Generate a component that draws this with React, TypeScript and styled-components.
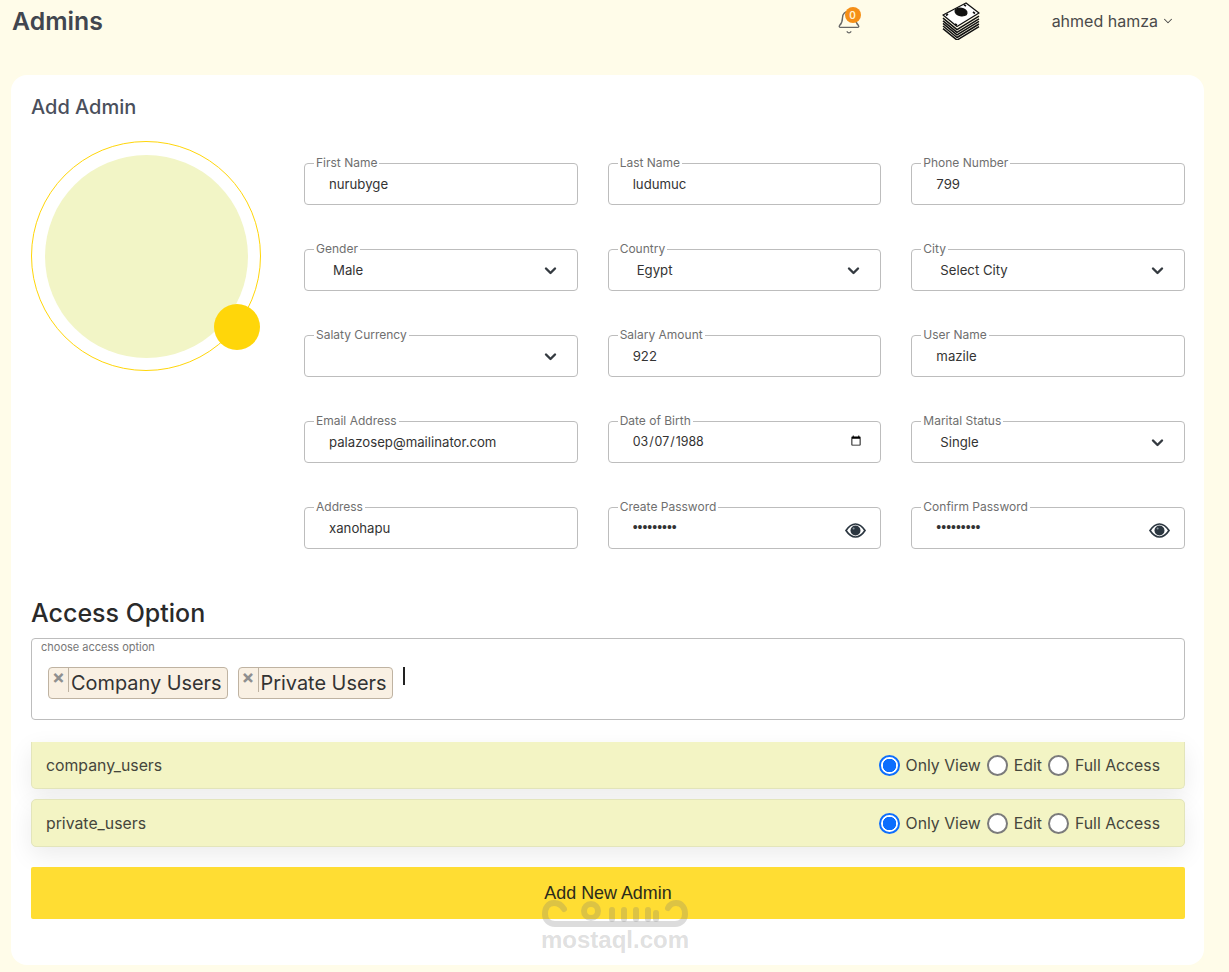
import React from "react";
import styled, { createGlobalStyle } from "styled-components";
import { Bell, ChevronDown } from "lucide-react";

const Global = createGlobalStyle`
  * { box-sizing: border-box; }
  html, body { margin: 0; padding: 0; }
  body { background: #fffce9; font-family: Inter, "Noto Sans", sans-serif; color: #333; }
`;

const Page = styled.div`
  position: relative;
  width: 1229px;
  height: 972px;
  padding: 0 25px 0 11px;
  overflow: hidden;
`;

const Header = styled.header`
  display: flex;
  align-items: flex-start;
  justify-content: space-between;
  height: 75px;
  padding-right: 29px;
`;

const PageTitle = styled.h1`
  margin: 5px 0 0 1px;
  font-size: 24.8px;
  line-height: 32px;
  font-weight: 600;
  color: #41464f;
`;

const HeaderRight = styled.div`
  display: flex;
  align-items: flex-start;
`;

const BellWrap = styled.div`
  position: relative;
  width: 22px;
  height: 22px;
  margin-top: 9px;
  color: #666;
  svg {
    display: block;
    margin-left: -2px;
  }
`;

const BellBadge = styled.span`
  position: absolute;
  left: 7px;
  top: -2px;
  width: 16px;
  height: 16px;
  border-radius: 50%;
  background: #f58f17;
  color: #fff3d0;
  font-size: 10px;
  line-height: 16px;
  font-weight: 600;
  text-align: center;
`;

const Money = styled.svg`
  display: block;
  width: 38px;
  height: 38px;
  margin: 2px 72px 0 82px;
`;

const UserName = styled.div`
  display: flex;
  align-items: center;
  gap: 3px;
  height: 22px;
  margin-top: 10px;
  font-size: 16px;
  color: #4a4a4a;
`;

const Card = styled.main`
  background: #fff;
  border-radius: 16px;
  height: 890px;
  padding: 20px 19px 0 20px;
`;

const CardTitle = styled.h2`
  margin: 0;
  font-size: 20px;
  line-height: 24px;
  font-weight: 500;
  color: #4a4f5c;
`;

const TopSection = styled.section`
  display: flex;
  margin-top: 22px;
`;

const AvatarRing = styled.div`
  position: relative;
  flex: none;
  width: 230px;
  height: 230px;
  border: 1px solid #ffd60a;
  border-radius: 50%;
  display: flex;
  align-items: center;
  justify-content: center;
`;

const AvatarFill = styled.div`
  width: 203px;
  height: 203px;
  border-radius: 50%;
  background: #f2f5c6;
`;

const AvatarDot = styled.div`
  position: absolute;
  left: 182px;
  top: 162px;
  width: 46px;
  height: 46px;
  border-radius: 50%;
  background: #ffd60a;
`;

const FormGrid = styled.div`
  flex: 1;
  margin: 22px 0 0 43px;
  display: grid;
  grid-template-columns: repeat(3, 1fr);
  column-gap: 30px;
  row-gap: 44px;
`;

const Field = styled.div`
  position: relative;
  height: 42px;
  border: 1px solid #bdbdbd;
  border-radius: 4px;
  background: #fff;
`;

const FieldLabel = styled.label`
  position: absolute;
  left: 9px;
  top: -9px;
  padding: 0 2px;
  background: #fff;
  font-size: 12px;
  line-height: 15px;
  color: #6f6f6f;
  white-space: nowrap;
`;

const TextInput = styled.input`
  width: 100%;
  height: 100%;
  border: 0;
  outline: 0;
  background: transparent;
  padding: 0 16px 0 24px;
  font-family: Inter, sans-serif;
  font-size: 13.2px;
  color: #333;
`;

const PasswordInput = styled(TextInput)`
  padding: 0 38px 3px 24px;
  font-family: "Liberation Sans", Arial, sans-serif;
  font-size: 14px;
`;

const DateInput = styled(TextInput)`
  padding: 0 16px 2px 23px;
  font-size: 12.4px;
`;

const SelectInput = styled.select`
  width: 100%;
  height: 100%;
  border: 0;
  outline: 0;
  appearance: none;
  background: transparent;
  padding: 0 38px 0 28px;
  font-family: Inter, sans-serif;
  font-size: 13.2px;
  color: #333;
`;

const SelectArrow = styled.svg`
  position: absolute;
  right: 20px;
  top: 14px;
  width: 13px;
  height: 13px;
  pointer-events: none;
`;

const EyeIcon = styled.svg`
  position: absolute;
  right: 14px;
  top: 15px;
  width: 21px;
  height: 15px;
`;

const AccessTitle = styled.h2`
  margin: 49px 0 0;
  font-size: 25px;
  line-height: 30px;
  font-weight: 500;
  color: #2a2a2a;
`;

const TagBox = styled.div`
  position: relative;
  height: 82px;
  margin-top: 10px;
  border: 1px solid #bdbdbd;
  border-radius: 4px;
  display: flex;
  align-items: flex-start;
  gap: 10px;
  padding: 28px 0 0 16px;
`;

const TagLabel = styled.span`
  position: absolute;
  left: 9px;
  top: 2px;
  font-size: 11px;
  line-height: 13px;
  color: #777;
`;

const Tag = styled.div`
  display: flex;
  height: 32px;
  border: 1px solid #bfb3a2;
  border-radius: 4px;
  background: #f9f0e3;
  font-size: 19.9px;
  line-height: 30px;
  color: #333;
`;

const TagRemove = styled.span`
  width: 20px;
  height: 24px;
  padding: 0 0 0 3px;
  border-right: 1px solid #bfb3a2;
  font-size: 19px;
  line-height: 20px;
  font-weight: 700;
  color: #8f8f8f;
`;

const TagText = styled.span`
  padding: 0 5px 0 2px;
`;

const Caret = styled.span`
  width: 2px;
  height: 18px;
  background: #222;
`;

const PermissionRow = styled.div<{ $first?: boolean }>`
  display: flex;
  align-items: center;
  justify-content: space-between;
  height: ${(p) => (p.$first ? "47px" : "48px")};
  margin-top: ${(p) => (p.$first ? "22px" : "10px")};
  padding: 0 24px 0 14px;
  background: #f3f4c4;
  border: 1px solid #e3e5bb;
  border-top: ${(p) => (p.$first ? "0" : "1px solid #e3e5bb")};
  border-radius: ${(p) => (p.$first ? "0 0 5px 5px" : "5px")};
  box-shadow: 0 8px 24px rgba(0, 0, 0, 0.08);
  font-size: 15.8px;
  color: #45463c;
`;

const RadioGroup = styled.div`
  display: flex;
  align-items: center;
`;

const RadioLabel = styled.label`
  display: flex;
  align-items: center;
  gap: 6px;
  margin-left: 6px;
`;

const Radio = styled.input`
  appearance: none;
  width: 21px;
  height: 21px;
  margin: 0;
  border: 2px solid #7b7b7b;
  border-radius: 50%;
  background: #fff;
  &:checked {
    border-color: #0d6efd;
    background: radial-gradient(circle, #0d6efd 0 6.5px, #fff 7px);
  }
`;

const SubmitButton = styled.button`
  display: block;
  width: 100%;
  height: 52px;
  margin-top: 20px;
  padding: 0;
  border: 0;
  border-radius: 2px;
  background: #ffdd33;
  font-family: "Liberation Sans", Arial, sans-serif;
  font-size: 17.9px;
  color: #2b2b1c;
`;

const Watermark = styled.div`
  position: absolute;
  left: 540px;
  top: 895px;
  width: 150px;
  pointer-events: none;
  text-align: center;
`;

const WatermarkLogo = styled.svg`
  display: block;
  width: 150px;
  height: 36px;
`;

const WatermarkText = styled.div`
  margin-top: -3px;
  font-family: "Liberation Sans", Arial, sans-serif;
  font-size: 24px;
  line-height: 24px;
  font-weight: 700;
  color: rgba(120, 120, 120, 0.24);
`;

const Arrow = () => (
  <SelectArrow viewBox="0 0 13 13" fill="none" stroke="#343a40" strokeWidth="2.4" strokeLinecap="round" strokeLinejoin="round">
    <path d="M2 4.5l4.5 4.5 4.5-4.5" />
  </SelectArrow>
);

const Eye = () => (
  <EyeIcon viewBox="0 0 21 15">
    <path d="M1 7.5C4 3 7 1 10.5 1S17 3 20 7.5C17 12 14 14 10.5 14S4 12 1 7.5z" fill="none" stroke="#2b3640" strokeWidth="1.7" />
    <circle cx="10.5" cy="7.5" r="5" fill="#2b3640" />
    <circle cx="8.6" cy="5.6" r="1" fill="#8a949c" />
  </EyeIcon>
);

type FieldDef = { label: string; kind: "text" | "select" | "date" | "password"; value: string };

const fields: FieldDef[] = [
  { label: "First Name", kind: "text", value: "nurubyge" },
  { label: "Last Name", kind: "text", value: "ludumuc" },
  { label: "Phone Number", kind: "text", value: "799" },
  { label: "Gender", kind: "select", value: "Male" },
  { label: "Country", kind: "select", value: "Egypt" },
  { label: "City", kind: "select", value: "Select City" },
  { label: "Salaty Currency", kind: "select", value: "" },
  { label: "Salary Amount", kind: "text", value: "922" },
  { label: "User Name", kind: "text", value: "mazile" },
  { label: "Email Address", kind: "text", value: "palazosep@mailinator.com" },
  { label: "Date of Birth", kind: "date", value: "1988-03-07" },
  { label: "Marital Status", kind: "select", value: "Single" },
  { label: "Address", kind: "text", value: "xanohapu" },
  { label: "Create Password", kind: "password", value: "123456789" },
  { label: "Confirm Password", kind: "password", value: "123456789" },
];

const FormField = ({ label, kind, value }: FieldDef) => (
  <Field>
    <FieldLabel>{label}</FieldLabel>
    {kind === "text" && <TextInput type="text" defaultValue={value} />}
    {kind === "date" && <DateInput type="date" defaultValue={value} />}
    {kind === "password" && (
      <>
        <PasswordInput type="password" defaultValue={value} />
        <Eye />
      </>
    )}
    {kind === "select" && (
      <>
        <SelectInput defaultValue={value}>
          <option value={value}>{value}</option>
        </SelectInput>
        <Arrow />
      </>
    )}
  </Field>
);

const PermissionOptions = ({ name }: { name: string }) => (
  <RadioGroup>
    <RadioLabel>
      <Radio type="radio" name={name} defaultChecked />
      Only View
    </RadioLabel>
    <RadioLabel>
      <Radio type="radio" name={name} />
      Edit
    </RadioLabel>
    <RadioLabel>
      <Radio type="radio" name={name} />
      Full Access
    </RadioLabel>
  </RadioGroup>
);

const MoneyStack = () => {
  const layers = [3.2, 5.8, 8.4, 11, 13.6];
  return (
    <Money viewBox="0 0 38 38" fill="none" stroke="#111" strokeWidth="1.3" strokeLinejoin="round">
      <path d="M1 13 24 1l13 10-22 13.5z" fill="#fff" />
      <ellipse cx="19" cy="10" rx="6" ry="3.8" transform="rotate(12 19 10)" fill="#111" />
      <path d="M4 13.5 6 12M33 11.5l-2-1.5M13 22l2 1M22 2.8l2 1.2" strokeWidth="1.6" />
      {layers.map((d) => (
        <path key={d} d={`M1 ${13 + d}l14 11.5L37 ${11 + d}`} strokeWidth="1.5" />
      ))}
    </Money>
  );
};

export default function App() {
  return (
    <>
      <Global />
      <Page>
        <Header>
          <PageTitle>Admins</PageTitle>
          <HeaderRight>
            <BellWrap>
              <Bell size={26} strokeWidth={1.3} />
              <BellBadge>0</BellBadge>
            </BellWrap>
            <MoneyStack />
            <UserName>
              ahmed hamza
              <ChevronDown size={14} strokeWidth={1.8} />
            </UserName>
          </HeaderRight>
        </Header>
        <Card>
          <CardTitle>Add Admin</CardTitle>
          <TopSection>
            <AvatarRing>
              <AvatarFill />
              <AvatarDot />
            </AvatarRing>
            <FormGrid>
              {fields.map((f) => (
                <FormField key={f.label} {...f} />
              ))}
            </FormGrid>
          </TopSection>
          <AccessTitle>Access Option</AccessTitle>
          <TagBox>
            <TagLabel>choose access option</TagLabel>
            <Tag>
              <TagRemove>×</TagRemove>
              <TagText>Company Users</TagText>
            </Tag>
            <Tag>
              <TagRemove>×</TagRemove>
              <TagText>Private Users</TagText>
            </Tag>
            <Caret />
          </TagBox>
          <PermissionRow $first>
            company_users
            <PermissionOptions name="company" />
          </PermissionRow>
          <PermissionRow>
            private_users
            <PermissionOptions name="private" />
          </PermissionRow>
          <SubmitButton>Add New Admin</SubmitButton>
        </Card>
        <Watermark>
          <WatermarkLogo viewBox="0 0 150 36" fill="none" stroke="rgba(120,120,120,0.26)" strokeWidth="6" strokeLinecap="round" strokeLinejoin="round">
            <path d="M24 14C21 9 17 8 14 8 8 8 5 13 5 19s4 10 10 10h120c6 0 10-4 10-10s-3-11-9-11c-3 0-6 1-8 5" />
            <circle cx="51" cy="16" r="7" />
            <path d="M72 24v-9M84 24v-9M96 24v-9M108 24v-9M116 24v-6" />
          </WatermarkLogo>
          <WatermarkText>mostaql.com</WatermarkText>
        </Watermark>
      </Page>
    </>
  );
}
